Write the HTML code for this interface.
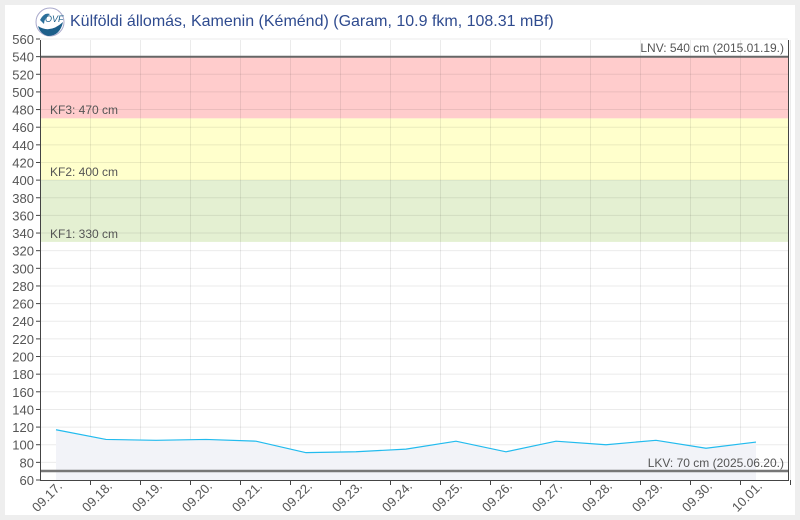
<!DOCTYPE html><html><head><style>
body{margin:0;background:#eee;font-family:"Liberation Sans",sans-serif;}
.card{position:absolute;left:5px;top:5px;width:790px;height:510px;background:#fff;}
</style></head><body><div class="card"></div>
<svg width="800" height="520" style="position:absolute;left:0;top:0" font-family="Liberation Sans, sans-serif">
<circle cx="50" cy="22" r="14" fill="#fff" stroke="#aac" stroke-width="1"/>
<path d="M38 26 Q50 34 63 22 Q60 36 48 36 Q40 34 38 26Z" fill="#1d5f8a"/>
<path d="M40 20 Q44 12 50 14 Q44 18 44 24Z" fill="#2a6f9a"/>
<text x="45" y="22" font-size="9" fill="#1d5f8a" font-style="italic">OVF</text>
<text x="70" y="26" font-size="16" fill="#2f4b8f">Külföldi állomás, Kamenin (Kéménd) (Garam, 10.9 fkm, 108.31 mBf)</text>
<rect x="40.5" y="56.7" width="748" height="61.7" fill="#ffcccc"/>
<rect x="40.5" y="118.4" width="748" height="61.7" fill="#ffffcc"/>
<rect x="40.5" y="180.1" width="748" height="61.8" fill="#e4f0d2"/>
<g id="g"></g>
</svg>
<script>
var s='';for(var v=80;v<=560;v+=20){var y=480-(v-60)*0.882;s+='<line x1="40" x2="788" y1="'+y+'" y2="'+y+'" stroke="rgba(0,0,0,0.08)"/>';}
for(var x=90;x<=790;x+=50){s+='<line x1="'+(x+.5)+'" x2="'+(x+.5)+'" y1="40" y2="480" stroke="rgba(0,0,0,0.08)"/>';}
var d=[117,106,105,106,104,91,92,95,104,92,104,100,105,96,103],p='';
for(var i=0;i<d.length;i++){p+=(i?'L':'M')+(56+50*i)+' '+(480-(d[i]-60)*0.882);}
s+='<path d="'+p+'L756 480L56 480Z" fill="#f2f3f8"/><path d="'+p+'" fill="none" stroke="#22bbee" stroke-width="1.2"/>';
s+='<line x1="40" x2="789" y1="56.7" y2="56.7" stroke="#666" stroke-width="2"/><line x1="40" x2="789" y1="471" y2="471" stroke="#777" stroke-width="2.5"/>';
s+='<line x1="40.5" x2="40.5" y1="40" y2="480" stroke="#444"/><line x1="40" x2="789" y1="480.5" y2="480.5" stroke="#444"/><line x1="788.5" x2="788.5" y1="40" y2="480" stroke="#444"/>';
for(var v=60;v<=560;v+=20){var y=480-(v-60)*0.882;s+='<line x1="36" x2="40" y1="'+y+'" y2="'+y+'" stroke="#444"/><text x="34" y="'+(y+5)+'" text-anchor="end" font-size="13" fill="#555">'+v+'</text>';}
for(var i=0;i<15;i++){var x=90+50*i;s+='<line x1="'+(x+.5)+'" x2="'+(x+.5)+'" y1="480" y2="485" stroke="#444"/>';var lx=63+50*i;var dd=17+i,lab=(dd<=30?'09.'+dd+'.':'10.01.');s+='<text x="'+lx+'" y="487" text-anchor="end" font-size="13" fill="#555" transform="rotate(-45 '+lx+' 487)">'+lab+'</text>';}
s+='<text x="50" y="114" font-size="12" fill="#555">KF3: 470 cm</text><text x="50" y="176" font-size="12" fill="#555">KF2: 400 cm</text><text x="50" y="238" font-size="12" fill="#555">KF1: 330 cm</text>';
s+='<text x="784" y="52" text-anchor="end" font-size="12" fill="#555">LNV: 540 cm (2015.01.19.)</text><text x="784" y="467" text-anchor="end" font-size="12" fill="#555">LKV: 70 cm (2025.06.20.)</text>';
document.getElementById('g').innerHTML=s;
</script>
</body></html>
